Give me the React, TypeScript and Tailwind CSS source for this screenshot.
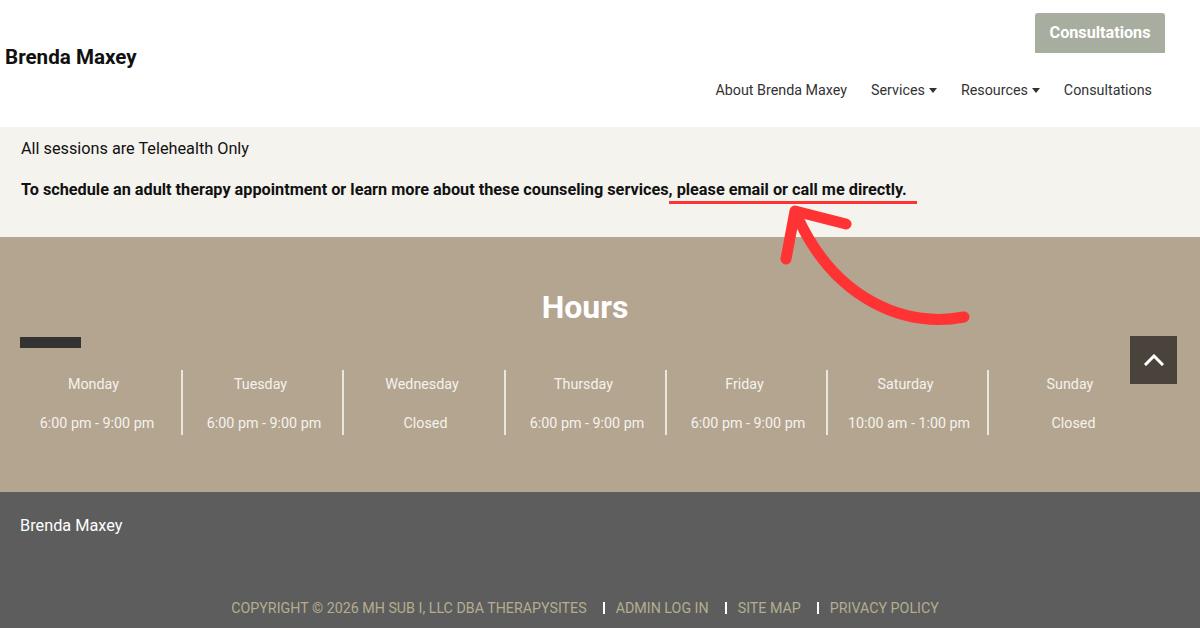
import React from "react";

const hours = [
  { day: "Monday", time: "6:00 pm - 9:00 pm" },
  { day: "Tuesday", time: "6:00 pm - 9:00 pm" },
  { day: "Wednesday", time: "Closed" },
  { day: "Thursday", time: "6:00 pm - 9:00 pm" },
  { day: "Friday", time: "6:00 pm - 9:00 pm" },
  { day: "Saturday", time: "10:00 am - 1:00 pm" },
  { day: "Sunday", time: "Closed" },
];

const footerLinks = ["Admin Log In", "Site Map", "Privacy Policy"];

function Caret() {
  return (
    <svg width="8" height="5" viewBox="0 0 8 5" className="ml-[4px] inline-block">
      <path d="M0 0 H8 L4 5 Z" fill="#333" />
    </svg>
  );
}

export default function App() {
  return (
    <main className="relative w-[1200px] h-[628px] overflow-hidden font-['Roboto',sans-serif]">
      {/* Header */}
      <header className="h-[127px] bg-white flex justify-between">
        <div className="pl-[5px] pt-[44px] text-[20.6px] font-bold text-[#111] leading-[26px]">Brenda Maxey</div>
        <div className="flex flex-col items-end pr-[35px] pt-[13px]">
          <a className="w-[130px] h-[40px] bg-[#a8ae9f] text-white font-bold text-[16.2px] flex items-center justify-center rounded-t-[3px] pt-[1px]">
            Consultations
          </a>
          <nav className="mt-[27px] mr-[13px] flex items-center gap-[24px] text-[14.3px] leading-[20px] text-[#333]">
            <span>About Brenda Maxey</span>
            <span className="flex items-center">Services<Caret /></span>
            <span className="flex items-center">Resources<Caret /></span>
            <span>Consultations</span>
          </nav>
        </div>
      </header>

      {/* Intro */}
      <section className="h-[110px] bg-[#f4f3ee] px-[21px] pt-[10px] text-[16.25px] leading-[24px] text-[#111]">
        <p>All sessions are Telehealth Only</p>
        <p className="mt-[17px] font-bold">
          To schedule an adult therapy appointment or learn more about these counseling services
          <span className="border-b-[3px] border-[#ff3333] pb-[2px] pr-[6px]">, please email or call me directly.&nbsp;</span>
        </p>
      </section>

      {/* Hours */}
      <section className="h-[255px] bg-[#b3a590] pt-[50px]">
        <div className="w-[1150px] pl-[20px]">
          <h2 className="text-center text-white font-bold text-[32px] leading-[40px]">Hours</h2>
          <div className="mt-[10px] w-[61px] h-[11px] bg-[#333]" />
        </div>
        <div className="mt-[22px] ml-[10px] grid grid-cols-[171px_161px_162px_161px_161px_161px_168px] text-[14.3px] leading-[20px] text-[#f5f2ec]">
          {hours.map((h, i) => (
            <div
              key={h.day}
              className={`h-[65px] pt-[4px] flex flex-col items-center ${i > 0 ? "border-l-2 border-[#ebe6de]" : ""}`}
            >
              <span className="pr-[4px]">{h.day}</span>
              <span className="mt-[19px] pl-[3px]">{h.time}</span>
            </div>
          ))}
        </div>
      </section>

      {/* Footer */}
      <footer className="h-[136px] bg-[#5d5d5d]">
        <div className="w-[1150px] pl-[20px] pt-[22px]">
          <p className="text-white text-[16.3px] leading-[24px]">Brenda Maxey</p>
          <div className="mt-[60px] flex items-center justify-center text-[14.25px] leading-[20px] uppercase text-[#b3ae8f]">
            <span>Copyright © 2026 MH Sub I, LLC dba TherapySites</span>
            {footerLinks.map((l) => (
              <React.Fragment key={l}>
                <span className="ml-[16px] mr-[11px] h-[12px] border-l-2 border-white" />
                <span>{l}</span>
              </React.Fragment>
            ))}
          </div>
        </div>
      </footer>

      {/* Back to top */}
      <button className="absolute left-[1130px] top-[336px] w-[47px] h-[48px] bg-[#4a433c] flex items-center justify-center">
        <svg width="20" height="12" viewBox="0 0 20 12" fill="none">
          <path d="M2 10 L10 2 L18 10" stroke="white" strokeWidth="3" strokeLinecap="square" />
        </svg>
      </button>

      {/* Annotation arrow */}
      <svg className="absolute left-0 top-0 pointer-events-none" width="1200" height="628" viewBox="0 0 1200 628" fill="none">
        <path d="M964 317 C905 328 835 300 797 216" stroke="#ff3333" strokeWidth="11" strokeLinecap="round" />
        <path d="M846 224 L795 211 L786 259" stroke="#ff3333" strokeWidth="11" strokeLinecap="round" strokeLinejoin="round" />
      </svg>
    </main>
  );
}
